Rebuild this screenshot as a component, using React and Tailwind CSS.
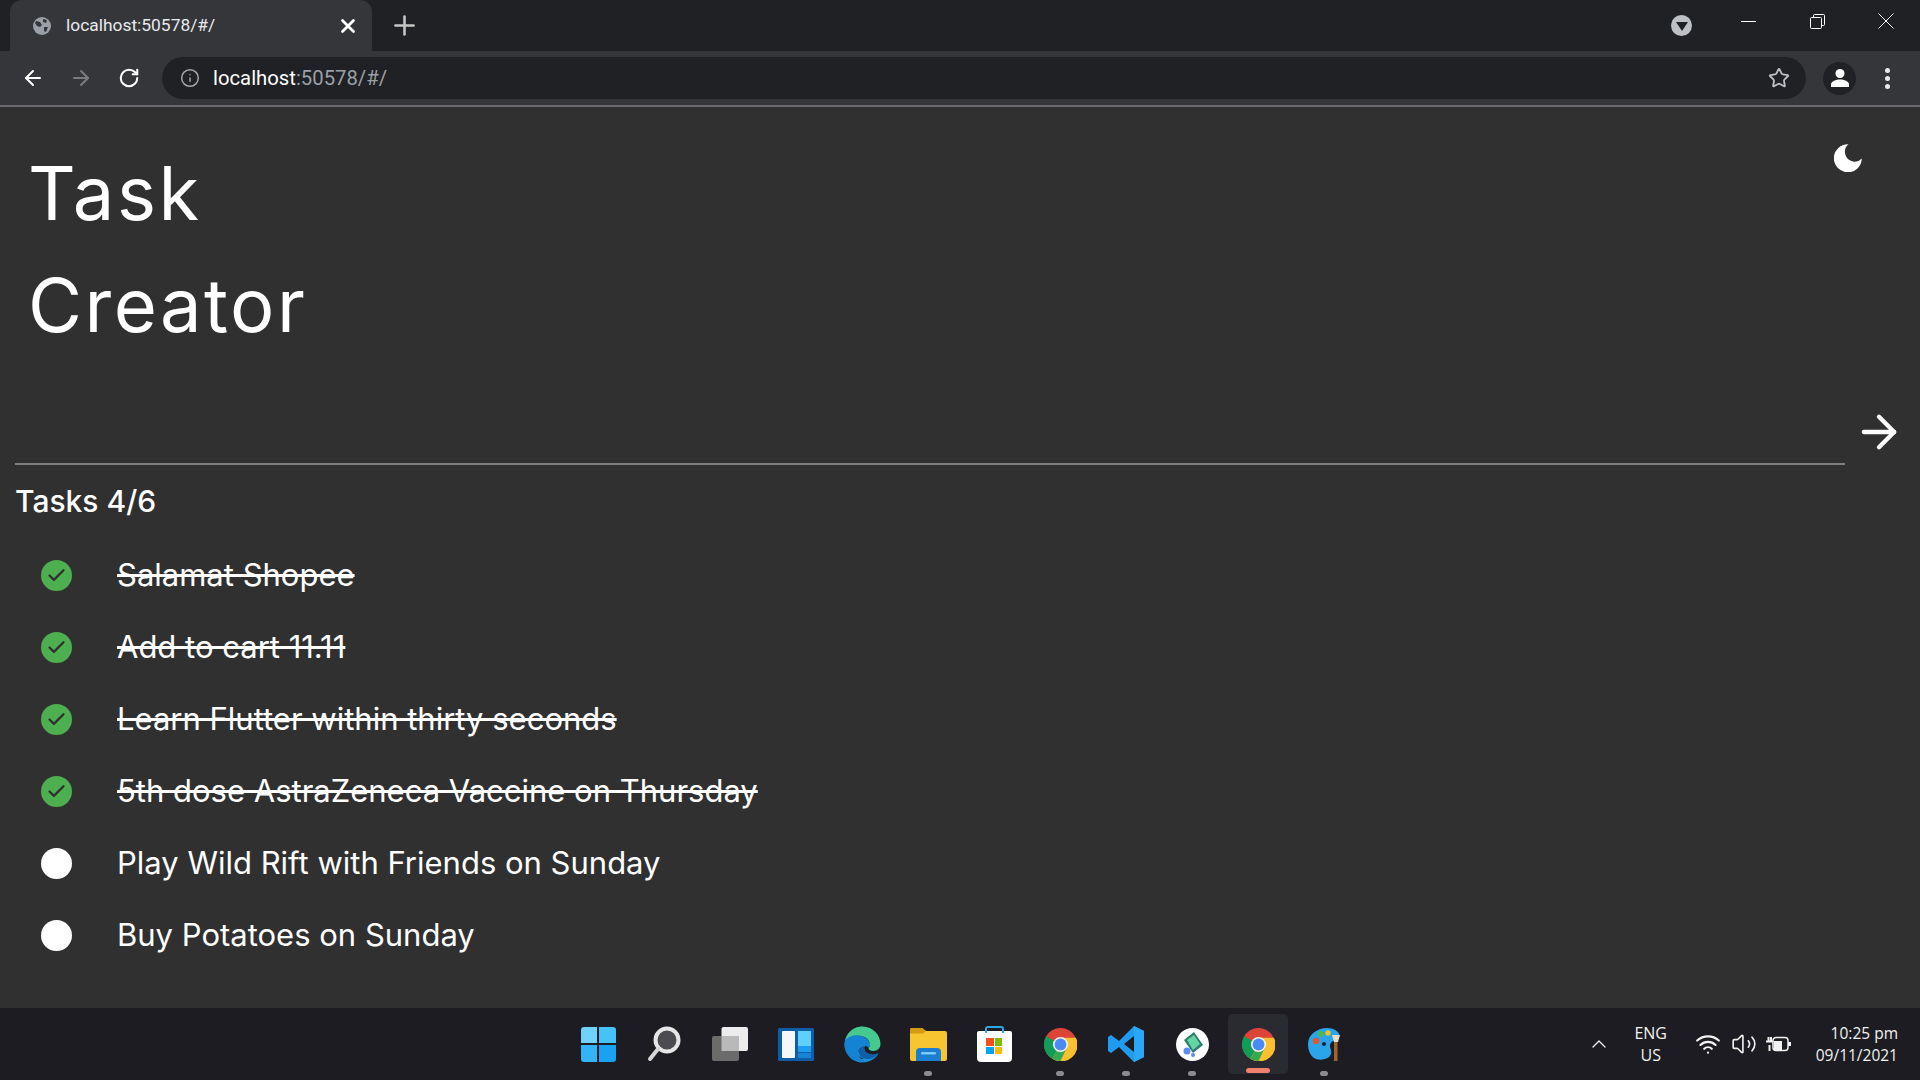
import React from "react";
import { ArrowLeft, ArrowRight, RotateCw, Info, Star, X, Plus, ChevronUp, Check, Wifi, Volume2 } from "lucide-react";

const tasks = [
  { text: "Salamat Shopee", done: true },
  { text: "Add to cart 11.11", done: true },
  { text: "Learn Flutter within thirty seconds", done: true },
  { text: "5th dose AstraZeneca Vaccine on Thursday", done: true },
  { text: "Play Wild Rift with Friends on Sunday", done: false },
  { text: "Buy Potatoes on Sunday", done: false },
];

function Chrome({ size = 36 }) {
  return (
    <svg width={size} height={size} viewBox="0 0 48 48">
      <circle cx="24" cy="24" r="24" fill="#db4437" />
      <path d="M24 24 L3.2 12 A24 24 0 0 0 12 44.8 L24 24Z" fill="#0f9d58" />
      <path d="M24 14 H46.4 A24 24 0 0 1 12 44.8 L24 24Z" fill="#fbc02d" />
      <path d="M24 24 L12 44.8 A24 24 0 0 0 26 47.9 L36 24Z" fill="#34a853" />
      <path d="M33 29 L24 48 A24 24 0 0 0 47 17 H33Z" fill="#fbc02d" />
      <circle cx="24" cy="24" r="11" fill="#f1f1f1" />
      <circle cx="24" cy="24" r="8.6" fill="#4a8af4" />
    </svg>
  );
}

function TaskbarIcon({ children, dot }) {
  return (
    <div className="relative w-[66px] h-[72px] flex items-center justify-center">
      {children}
      {dot && <span className="absolute bottom-[4px] left-[29px] w-[8px] h-[5px] rounded-full bg-[#8b8b90]" />}
    </div>
  );
}

function TaskRow({ task }) {
  return (
    <div className="h-[72px] flex items-center pl-[41px]">
      {task.done ? (
        <span className="w-[31px] h-[31px] rounded-full bg-[#4caf50] flex items-center justify-center">
          <Check size={21} strokeWidth={2.6} className="text-[#303030]" />
        </span>
      ) : (
        <span className="w-[31px] h-[31px] rounded-full bg-white" />
      )}
      <span
        className={`ml-[45px] text-[31px] text-white font-['Inter',sans-serif] ${task.done ? "line-through" : ""}`}
      >
        {task.text}
      </span>
    </div>
  );
}

export default function App() {
  return (
    <div className="w-[1920px] h-[1080px] overflow-hidden flex flex-col bg-[#303030] font-['Roboto',sans-serif]">
      {/* tab strip */}
      <div className="h-[51px] bg-[#202124] flex items-end pl-[10px] shrink-0">
        <div className="w-[362px] h-[51px] bg-[#35363a] rounded-t-[12px] flex items-center pl-[23px] pr-[13px]">
          <svg width="18" height="18" viewBox="0 0 18 18" className="shrink-0">
            <circle cx="9" cy="9" r="9" fill="#9aa0a6" />
            <path d="M3 4l4 1 2 3-2 2-3-1-2-3zM10 2l4 1-1 3-3-1zM11 10l4 0-2 5-2-1z" fill="#35363a" />
          </svg>
          <span className="ml-[15px] text-[17.4px] text-[#e8eaed] flex-1">localhost:50578/#/</span>
          <X size={22} strokeWidth={3} className="text-white" />
        </div>
        <div className="h-[51px] flex items-center ml-[17px]">
          <Plus size={31} strokeWidth={2} className="text-[#c4c7c5]" />
        </div>
        <div className="flex-1" />
        <div className="h-[51px] flex items-center">
          <span className="w-[21px] h-[21px] rounded-full bg-[#bdc1c6] flex items-center justify-center">
            <span className="w-0 h-0 border-l-[6px] border-r-[6px] border-t-[9px] border-l-transparent border-r-transparent border-t-[#202124] mt-[2px]" />
          </span>
        </div>
        <div className="h-[42px] self-start flex items-center ml-[49px]">
          <span className="w-[15px] h-[1px] bg-white" />
        </div>
        <div className="h-[42px] self-start flex items-center ml-[54px]">
          <svg width="15" height="15" viewBox="0 0 15 15" fill="none" stroke="#fff" strokeWidth="1">
            <rect x="0.5" y="3.5" width="11" height="11" rx="1" />
            <path d="M3.5 3V1.5a1 1 0 0 1 1-1h9a1 1 0 0 1 1 1v9a1 1 0 0 1-1 1H12" />
          </svg>
        </div>
        <div className="h-[42px] self-start flex items-center ml-[53px] mr-[26px]">
          <svg width="16" height="16" viewBox="0 0 16 16" stroke="#fff" strokeWidth="1">
            <path d="M0.5 0.5L15.500 15.500M15.500 0.5L0.5 15.500" />
          </svg>
        </div>
      </div>

      {/* toolbar */}
      <div className="h-[54px] bg-[#35363a] flex items-center shrink-0">
        <ArrowLeft size={24} strokeWidth={2} className="ml-[21px] text-white" />
        <ArrowRight size={24} strokeWidth={2} className="ml-[24px] text-[#7b7c7f]" />
        <RotateCw size={22} strokeWidth={2.2} className="ml-[25px] text-white" />
        <div className="ml-[22px] w-[1644px] h-[42px] rounded-full bg-[#202124] flex items-center pl-[18px] pr-[16px]">
          <Info size={20} strokeWidth={1.8} className="text-[#a5a6a8]" />
          <span className="ml-[13px] text-[20.3px] flex-1">
            <span className="text-white">localhost</span>
            <span className="text-[#9aa0a6]">:50578/#/</span>
          </span>
          <Star size={22} strokeWidth={2} className="text-[#bdc1c6]" />
        </div>
        <div className="ml-[17px] w-[33px] h-[33px] rounded-full bg-[#202124] flex items-center justify-center">
          <svg width="20" height="20" viewBox="0 0 20 20" fill="#fff">
            <circle cx="10" cy="5.5" r="4.5" />
            <path d="M1 19v-2.5C1 13 6 11.5 10 11.5s9 1.500 9 5V19z" />
          </svg>
        </div>
        <div className="ml-[29px] flex flex-col gap-[3px]">
          <span className="w-[5px] h-[5px] rounded-full bg-[#e8eaed]" />
          <span className="w-[5px] h-[5px] rounded-full bg-[#e8eaed]" />
          <span className="w-[5px] h-[5px] rounded-full bg-[#e8eaed]" />
        </div>
      </div>
      <div className="h-[2px] bg-[#6a6b6e] shrink-0" />

      {/* app */}
      <main className="flex-1 flex flex-col">
        <div className="relative pl-[28px] pt-[30px]">
          <div className="text-[74px] leading-[112px] tracking-[2.5px] text-white font-['Inter',sans-serif]">Task</div>
          <div className="text-[74px] leading-[112px] tracking-[2.5px] text-white font-['Inter',sans-serif]">Creator</div>
          <svg
            width="28"
            height="28"
            viewBox="0 0 28 28"
            className="absolute right-[58px] top-[37px]"
            fill="#fff"
          >
            <path d="M14.500 0.300A14 14 0 1 0 27.800 14.500 A9.500 9.500 0 0 1 19 17.500 A9.800 9.800 0 0 1 14.500 0.300Z" />
          </svg>
        </div>
        <div className="flex items-start pl-[15px] pr-[15px] h-[80px] mt-[24px]">
          <div className="flex-1 self-end h-[2px] bg-[#808080]" />
          <ArrowRight size={52} strokeWidth={2} className="ml-[8px] mt-[21px] text-white" />
        </div>
        <div className="pl-[15px] mt-[16px] text-[30px] leading-[40px] font-medium text-white font-['Inter',sans-serif]">
          Tasks 4/6
        </div>
        <div className="mt-[18px]">
          {tasks.map((t) => (
            <TaskRow key={t.text} task={t} />
          ))}
        </div>
      </main>

      {/* taskbar */}
      <footer className="h-[72px] bg-[#1c1c22] shrink-0 relative flex items-center justify-center">
        <div className="flex items-center ml-[2px]">
          <TaskbarIcon>
            <div className="grid grid-cols-2 gap-[2px] w-[35px] h-[35px]">
              <span className="bg-[#6fd3fb] rounded-tl-[3px]" />
              <span className="bg-[#45c2f8] rounded-tr-[3px]" />
              <span className="bg-[#33b4f6] rounded-bl-[3px]" />
              <span className="bg-[#1aa2f2] rounded-br-[3px]" />
            </div>
          </TaskbarIcon>
          <TaskbarIcon>
            <svg width="34" height="36" viewBox="0 0 34 36">
              <circle cx="20" cy="14" r="11.500" fill="#4c4b50" stroke="#e6e6e6" strokeWidth="4" />
              <path d="M11 23L3 33" stroke="#d6d6d6" strokeWidth="4" strokeLinecap="round" />
            </svg>
          </TaskbarIcon>
          <TaskbarIcon>
            <svg width="36" height="34" viewBox="0 0 36 34">
              <rect x="9.500" y="0" width="26.500" height="24" rx="2" fill="#ececec" />
              <rect x="0" y="9" width="27" height="25" rx="2" fill="#6b6b6b" />
              <rect x="9.500" y="9" width="17.500" height="15" fill="#b9b9b9" />
            </svg>
          </TaskbarIcon>
          <TaskbarIcon>
            <svg width="36" height="33" viewBox="0 0 36 33">
              <rect width="36" height="33" rx="1.500" fill="#0f5da8" />
              <rect x="4" y="3" width="13" height="27" rx="1" fill="#f4f6f8" />
              <rect x="20" y="3" width="13" height="16" fill="#5fd0fc" />
              <rect x="20" y="18" width="13" height="6" fill="#1e9cf0" />
              <rect x="20" y="25" width="13" height="5" fill="#1783d6" />
            </svg>
          </TaskbarIcon>
          <TaskbarIcon>
            <svg width="37" height="37" viewBox="0 0 37 37">
              <path d="M18.500 0.500C8 0.500 0.500 9 0.500 18.500c0 10 8 18 18 18 7 0 13-3.500 16-9-6 3-13 1-14-4-1-3 1-5 4-4 3 0 6 3 6 3-1-4-5-7-9-7-5 0-9 3-10 7C10.500 26 14 31 20 33 11 33 4 26 4 18.500 4 14 7 11 11 10c6-1.500 11 0 14 3" fill="#1b8fd8" />
              <path d="M1 15C3 6 10 0.500 18.500 0.500 29 0.500 36.500 9 36.500 18c0 4-3 7-7 7-3 0-5-1-5-3 3-3 1-8-3-10.500C15 8 5 9 1 15Z" fill="#45c98c" />
              <path d="M1 15c3-5 12-7 19-4 5 2 7 7 4.500 11-2-2.500-5-3.500-8-2-4 2-4 7-1 11 1 1.500 2.500 2.500 5 3.500-1 0.800-1.500 1-2 1C9 35.500 0.500 28 0.500 18.500z" fill="#1583d3" />
              <path d="M14 25c1 5 5 8 10 8 4 0 8-2 10.500-6-6 2.500-12 1-14-3-1-2-0.500-3 0-4-3 0-6 2-6.500 5z" fill="#0f5ea8" />
            </svg>
          </TaskbarIcon>
          <TaskbarIcon dot>
            <svg width="37" height="34" viewBox="0 0 37 34">
              <path d="M0 3a2 2 0 0 1 2-2h10l4 3h19a2 2 0 0 1 2 2v26a2 2 0 0 1-2 2H2a2 2 0 0 1-2-2z" fill="#f7c52f" />
              <path d="M0 3a2 2 0 0 1 2-2h10l4 3-3 2.500H0z" fill="#d59a14" />
              <path d="M6 34V25a4 4 0 0 1 4-4h17a4 4 0 0 1 4 4v9z" fill="#1a7fd0" />
              <rect x="11" y="25" width="15" height="2.500" rx="1" fill="#7ccbf7" />
            </svg>
          </TaskbarIcon>
          <TaskbarIcon>
            <div className="relative w-[35px] h-[31px] mt-[4px] bg-white rounded-b-[4px] rounded-t-[2px] flex items-center justify-center">
              <span className="absolute -top-[5px] left-[8px] w-[19px] h-[7px] border-2 border-b-0 border-[#2fa6e8] rounded-t-[3px]" />
              <div className="grid grid-cols-2 gap-[1px] w-[16px] h-[16px]">
                <span className="bg-[#f25022]" />
                <span className="bg-[#7fba00]" />
                <span className="bg-[#00a4ef]" />
                <span className="bg-[#ffb900]" />
              </div>
            </div>
          </TaskbarIcon>
          <TaskbarIcon dot>
            <Chrome size={33} />
          </TaskbarIcon>
          <TaskbarIcon dot>
            <svg width="36" height="36" viewBox="0 0 36 36">
              <path d="M26 0L36 5V31L26 36L11 21L3 27L0 25V11L3 9L11 15zM26 10L16 18L26 26z" fill="#1f9cf0" />
              <path d="M26 0L36 5V31L26 36z" fill="#29a9f5" />
            </svg>
          </TaskbarIcon>
          <TaskbarIcon dot>
            <svg width="33" height="33" viewBox="0 0 33 33">
              <circle cx="16.500" cy="16.500" r="16.500" fill="#fff" />
              <path d="M8 12L18 4L27 17L17 25Z" fill="#2a7d6a" />
              <path d="M11 12L18 7L24 16L17 22Z" fill="#63d6a6" />
              <circle cx="11" cy="23" r="3.500" fill="#5b8def" />
              <circle cx="17" cy="27" r="2" fill="#5b8def" />
            </svg>
          </TaskbarIcon>
          <div className="relative w-[60px] h-[60px] mx-[3px] rounded-[5px] bg-[#2a2a31] flex items-center justify-center">
            <Chrome size={33} />
            <span className="absolute bottom-[1px] left-[18px] w-[24px] h-[5px] rounded-full bg-[#f0816e]" />
          </div>
          <TaskbarIcon dot>
            <svg width="36" height="36" viewBox="0 0 36 36">
              <path d="M2 18C2 8 12 2 21 2c8 0 14 5 12 9-2 4-8 3-9 8-0.500 3 2 5 1 9-2 6-12 7-17 4C4 29 2 24 2 18z" fill="#2aa5ea" />
              <circle cx="10" cy="15" r="3.200" fill="#e4572e" />
              <circle cx="15" cy="8" r="3" fill="#4fb946" />
              <circle cx="22" cy="7" r="2.700" fill="#f6c026" />
              <circle cx="18" cy="18" r="2" fill="#123" />
              <path d="M26 9h8l-2 7h-4z" fill="#e9dcc4" />
              <rect x="28" y="16" width="3.500" height="19" fill="#a0642a" />
            </svg>
          </TaskbarIcon>
        </div>

        <div className="absolute right-0 top-0 bottom-0 flex items-center text-[#f2f2f2] text-[16px] font-['Open_Sans',sans-serif]">
          <ChevronUp size={24} strokeWidth={1.3} className="mr-[15px]" />
          <div className="w-[50px] text-center leading-[22px]">
            <div>ENG</div>
            <div>US</div>
          </div>
          <Wifi size={26} strokeWidth={2} className="ml-[19px]" />
          <Volume2 size={26} strokeWidth={1.5} className="ml-[10px]" />
          <svg width="26" height="20" viewBox="0 0 26 20" fill="none" stroke="#f2f2f2" strokeWidth="1.500" className="ml-[9px]">
            <rect x="7" y="3.500" width="15" height="13" rx="3" />
            <rect x="8" y="7" width="8" height="9" fill="#f2f2f2" stroke="none" />
            <path d="M23.500 8v4" strokeWidth="3" />
            <path d="M0 7.500h7M2.500 3v4M5 3v4M3.500 11v6" strokeWidth="2" />
          </svg>
          <div className="ml-[24px] mr-[22px] text-right leading-[22px] text-[15.5px]">
            <div>10:25 pm</div>
            <div>09/11/2021</div>
          </div>
        </div>
      </footer>
    </div>
  );
}
